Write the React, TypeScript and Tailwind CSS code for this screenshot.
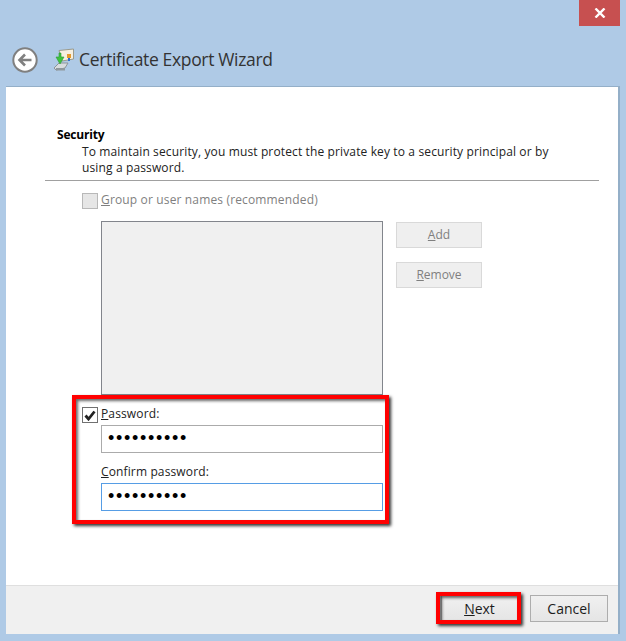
const font = "font-['Open_Sans','Liberation_Sans',sans-serif]";

function CertIcon() {
  return (
    <svg width="22" height="24" viewBox="0 0 22 24" className="ml-[15px] mr-[4px] shrink-0">
      <path d="M6 2.5 L20.5 1 L20.5 11 L9 13 Z" fill="#f6efe0" stroke="#9a9a8c" strokeWidth="1" />
      <rect x="14" y="6" width="4" height="4" fill="#e59a2c" />
      <rect x="15" y="10" width="2" height="3" fill="#2f6fd0" />
      <path d="M1 20 L6 15 L15 15 L12 20 L3 22 Z" fill="#d8dcde" stroke="#8d9498" strokeWidth="1" />
      <rect x="3" y="20" width="9" height="2.5" fill="#8f979c" />
      <path d="M8 5 L8 9 L11 9 L7 16 L3 9 L6 9 L6 5 Z" fill="#3fc23f" stroke="#2b9a36" strokeWidth="0.6" />
    </svg>
  );
}

function BackButton() {
  return (
    <svg width="26" height="26" viewBox="0 0 26 26" className="shrink-0">
      <circle cx="13" cy="13" r="11.7" fill="#fff" stroke="#808080" strokeWidth="2" />
      <path d="M13 7.5 L7.5 13 L13 18.5 M8 13 H19.5" fill="none" stroke="#808080" strokeWidth="2.6" />
    </svg>
  );
}

function Check({ checked }: { checked?: boolean }) {
  return (
    <div
      className={
        "w-[16px] h-[16px] border shrink-0 flex items-center justify-center " +
        (checked ? "border-[#707070] bg-white" : "border-[#b8b8b8] bg-[#e6e6e6]")
      }
    >
      {checked && (
        <svg width="12" height="11" viewBox="0 0 12 11">
          <path d="M1.5 5.5 L4.5 9 L10.5 1.5" fill="none" stroke="#222" strokeWidth="2.8" />
        </svg>
      )}
    </div>
  );
}

function Password({ focused }: { focused?: boolean }) {
  return (
    <input
      type="password"
      readOnly
      value="1234567890"
      className={
        "block w-[282px] h-[28px] px-[6px] pb-[2px] border bg-white text-black text-[18px] tracking-[1.7px] outline-none font-['Liberation_Sans',sans-serif] " +
        (focused ? "border-[#569de5]" : "border-[#ababab]")
      }
    />
  );
}

export default function App() {
  return (
    <div className={`${font} relative w-[626px] h-[641px] overflow-hidden bg-[#afcae6] text-[12px] text-black`}>
      <div className="flex justify-end pr-[6px] h-[26px]">
        <div className="w-[41px] h-[26px] bg-[#c75050] flex items-center justify-center">
          <svg width="12" height="10" viewBox="0 0 12 10">
            <path d="M1.5 0.5 L10.5 9.5 M10.5 0.5 L1.5 9.5" stroke="#fff" strokeWidth="2.4" />
          </svg>
        </div>
      </div>

      <div className="flex items-center h-[60px] pl-[12px] pt-[8px]">
        <BackButton />
        <CertIcon />
        <div className="text-[17.5px] tracking-[-0.34px] text-[#333] leading-none">Certificate Export Wizard</div>
      </div>

      <div className="mx-[6px] h-[548px] w-[614px] border-t border-r-2 border-[#94afc8] bg-white flex flex-col">
        <div className="flex-1 relative pt-[39px]">
          <div className="pl-[51px] font-bold leading-[17px] tracking-[-0.2px]">Security</div>
          <div className="pl-[76px] pr-[60px] leading-[16px] text-[#222] mt-[1px] tracking-[0.13px]">
            To maintain security, you must protect the private key to a security principal or by using a password.
          </div>
          <div className="ml-[39px] mr-[19px] h-px bg-[#a0a0a0] mt-[4px]" />

          <div className="flex items-center gap-[3px] ml-[76px] mt-[12px] text-[#7f7f7f] tracking-[0.15px]">
            <Check />
            <span className="-mt-[2px]">
              <span className="underline">G</span>roup or user names (recommended)
            </span>
          </div>

          <div className="flex ml-[95px] mt-[12px]">
            <div className="w-[282px] h-[174px] border border-[#82858c] bg-[#f0f0f0]" />
            <div className="ml-[13px] mt-px flex flex-col gap-[14px]">
              <button className="w-[86px] h-[26px] border border-[#d9d9d9] bg-[#efefef] text-[#7f7f7f]">
                <span className="underline">A</span>dd
              </button>
              <button className="w-[86px] h-[26px] border border-[#d9d9d9] bg-[#efefef] text-[#7f7f7f]">
                <span className="underline">R</span>emove
              </button>
            </div>
          </div>

          <div className="flex items-start gap-[3px] ml-[76px] mt-[12px] tracking-[0.13px]">
            <Check checked />
            <div className="flex flex-col">
              <div className="leading-[18px] text-[#222] -mt-[2px] mb-[2px]">
                <span className="underline">P</span>assword:
              </div>
              <Password />
              <div className="leading-[18px] text-[#222] mt-[10px] mb-[2px]">
                <span className="underline">C</span>onfirm password:
              </div>
              <Password focused />
            </div>
          </div>

          <div className="absolute left-[66px] top-[308px] w-[317px] h-[129px] border-[4px] border-[#ff0000] shadow-[2px_2px_3px_#333,inset_2px_2px_3px_rgba(40,40,40,0.7)]" />
        </div>

        <div className="h-[49px] border-t border-[#dfdfdf] bg-[#f0f0f0] flex justify-end items-start pt-[9px] pr-[10px] gap-[12px] text-[14px] text-[#1c1c1c]">
          <div className="relative">
            <button className="w-[77px] h-[27px] border border-[#adadad] bg-gradient-to-b from-[#f0f0f0] to-[#e5e5e5]">
              <span className="underline">N</span>ext
            </button>
            <div className="absolute -left-[5px] -top-[3px] w-[85px] h-[32px] border-[4px] border-[#ff0000] shadow-[2px_2px_3px_#333,inset_2px_2px_3px_rgba(40,40,40,0.7)]" />
          </div>
          <button className="w-[78px] h-[27px] border border-[#adadad] bg-gradient-to-b from-[#f0f0f0] to-[#e5e5e5]">
            Cancel
          </button>
        </div>
      </div>
    </div>
  );
}
